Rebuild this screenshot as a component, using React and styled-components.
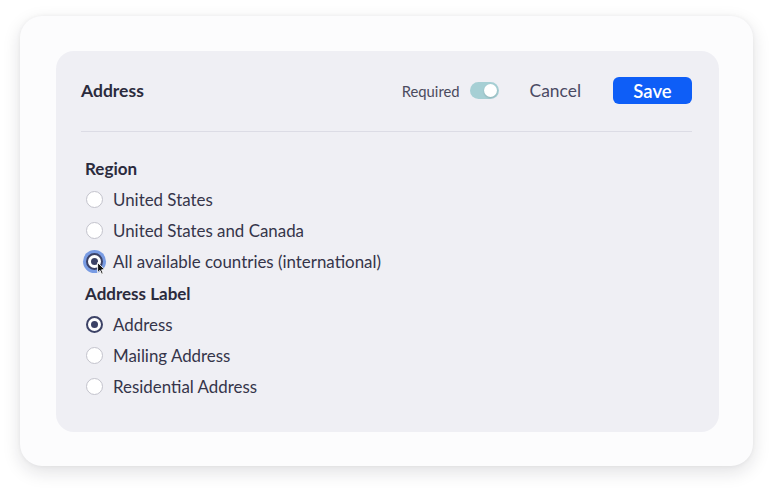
import React, { useState } from 'react'
import styled, { createGlobalStyle } from 'styled-components'

const Global = createGlobalStyle`
  body {
    margin: 0;
    background: #ffffff;
    font-family: "Lato", "Noto Sans", sans-serif;
  }
`

const Stage = styled.div`
  padding: 16px 21px 25px 20px;
`
const Card = styled.div`
  width: 733px;
  height: 450px;
  box-sizing: border-box;
  padding: 35px 34px 34px 36px;
  background: #fcfcfd;
  border-radius: 22px;
  box-shadow: 0 6px 18px rgba(20, 20, 40, 0.13), 0 0 4px rgba(20, 20, 40, 0.05);
`
const Panel = styled.div`
  height: 100%;
  box-sizing: border-box;
  padding: 0 27px 0 25px;
  background: #efeff4;
  border-radius: 18px;
`
const Header = styled.div`
  display: flex;
  align-items: center;
  padding: 26px 0 27px;
  border-bottom: 1px solid #dcdce5;
`
const Title = styled.div`
  flex: 1;
  font-size: 17.5px;
  font-weight: 700;
  color: #2b2b3d;
`
const RequiredLabel = styled.span`
  font-size: 14.8px;
  color: #4b4b5e;
  margin-right: 10px;
`
const Toggle = styled.span`
  width: 29px;
  height: 17px;
  border-radius: 9px;
  background: #a6cfd4;
  display: flex;
  align-items: center;
  justify-content: flex-end;
  padding: 0 2px;
  box-sizing: border-box;
  margin-right: 31px;
`
const Knob = styled.span`
  width: 13px;
  height: 13px;
  border-radius: 50%;
  background: #ffffff;
  box-shadow: 0 1px 2px rgba(0, 0, 0, 0.15);
`
const TextButton = styled.button`
  border: none;
  background: none;
  font: inherit;
  font-size: 17.4px;
  color: #4a4a63;
  padding: 0;
  margin-right: 32px;
`
const SaveButton = styled.button`
  border: none;
  width: 79px;
  height: 27px;
  border-radius: 6px;
  background: #0e5ef7;
  color: #ffffff;
  font: inherit;
  font-size: 18.5px;
  font-weight: 600;
`
const Body = styled.div`
  display: flex;
  flex-direction: column;
  padding-top: 25px;
`
const GroupLabel = styled.div`
  font-size: 17px;
  font-weight: 700;
  color: #2b2b3d;
  line-height: 24px;
  margin: ${(p) => (p.$first ? '0' : '5px')} 0 3px 4px;
`
const Option = styled.label`
  display: flex;
  align-items: center;
  height: 31px;
  padding-left: 5px;
  font-size: 16.9px;
  color: #35354a;
  cursor: pointer;
`
const Dot = styled.span`
  position: relative;
  flex: none;
  width: 17px;
  height: 17px;
  box-sizing: border-box;
  border-radius: 50%;
  margin-right: 10px;
  background: #ffffff;
  border: ${(p) => (p.$on ? '2.5px solid #3c4266' : '1.5px solid #c3c3cc')};
  box-shadow: ${(p) => (p.$focus ? '0 0 0 3px rgba(70, 120, 220, 0.7)' : 'none')};
  display: flex;
  align-items: center;
  justify-content: center;
  &::after {
    content: '';
    display: ${(p) => (p.$on ? 'block' : 'none')};
    width: 7px;
    height: 7px;
    border-radius: 50%;
    background: #3c4266;
  }
`
const Pointer = styled.svg`
  position: absolute;
  left: 9px;
  top: 7px;
  width: 9px;
  height: 13px;
`

const regions = ['United States', 'United States and Canada', 'All available countries (international)']
const labels = ['Address', 'Mailing Address', 'Residential Address']

const App = () => {
  const [region, setRegion] = useState(2)
  const [label, setLabel] = useState(0)

  return (
    <Stage>
      <Global />
      <Card>
        <Panel>
          <Header>
            <Title>Address</Title>
            <RequiredLabel>Required</RequiredLabel>
            <Toggle>
              <Knob />
            </Toggle>
            <TextButton>Cancel</TextButton>
            <SaveButton>Save</SaveButton>
          </Header>
          <Body>
            <GroupLabel $first>Region</GroupLabel>
            {regions.map((r, i) => (
              <Option key={r} onClick={() => setRegion(i)}>
                <Dot $on={region === i} $focus={region === i && i === 2}>
                  {region === i && i === 2 && (
                    <Pointer viewBox="0 0 9 13">
                      <path d="M0.6 0.6 L0.6 10.6 L3 8.4 L4.6 12.2 L6.2 11.5 L4.6 7.8 L7.8 7.6 Z" fill="#111" stroke="#fff" strokeWidth="0.9" />
                    </Pointer>
                  )}
                </Dot>
                {r}
              </Option>
            ))}
            <GroupLabel>Address Label</GroupLabel>
            {labels.map((l, i) => (
              <Option key={l} onClick={() => setLabel(i)}>
                <Dot $on={label === i} />
                {l}
              </Option>
            ))}
          </Body>
        </Panel>
      </Card>
    </Stage>
  )
}

export default App
